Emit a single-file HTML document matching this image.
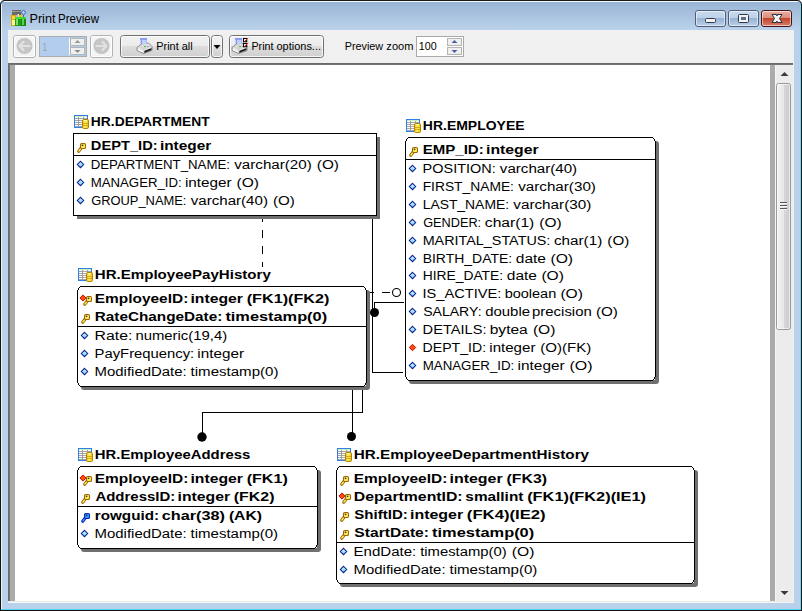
<!DOCTYPE html><html><head><meta charset="utf-8"><style>html,body{margin:0;padding:0;width:802px;height:611px;overflow:hidden;background:#fff}svg{display:block}text{font-family:"Liberation Sans",sans-serif}</style></head><body><svg width="802" height="611" viewBox="0 0 802 611" shape-rendering="auto"><defs>
<linearGradient id="gTitle" x1="0" y1="0" x2="0" y2="1"><stop offset="0" stop-color="#97b2d2"/><stop offset="1" stop-color="#bad2eb"/></linearGradient>
<linearGradient id="gBtn" x1="0" y1="0" x2="0" y2="1"><stop offset="0" stop-color="#f2f2f2"/><stop offset="0.48" stop-color="#ebebeb"/><stop offset="0.5" stop-color="#dddddd"/><stop offset="1" stop-color="#cfcfcf"/></linearGradient>
<linearGradient id="gCap" x1="0" y1="0" x2="0" y2="1"><stop offset="0" stop-color="#cbdbee"/><stop offset="0.47" stop-color="#bcd0e8"/><stop offset="0.5" stop-color="#98b3d3"/><stop offset="1" stop-color="#bcd1ea"/></linearGradient>
<linearGradient id="gClose" x1="0" y1="0" x2="0" y2="1"><stop offset="0" stop-color="#eab0a2"/><stop offset="0.47" stop-color="#dc8e7c"/><stop offset="0.5" stop-color="#c3442a"/><stop offset="1" stop-color="#d98270"/></linearGradient>
<linearGradient id="gThumb" x1="0" y1="0" x2="1" y2="0"><stop offset="0" stop-color="#f3f3f3"/><stop offset="0.5" stop-color="#e8e8e8"/><stop offset="0.5" stop-color="#d9d9dc"/><stop offset="1" stop-color="#c9c9ce"/></linearGradient>
<linearGradient id="gDia" x1="0" y1="0" x2="0" y2="1"><stop offset="0" stop-color="#e0faff"/><stop offset="1" stop-color="#62cdf8"/></linearGradient>
<linearGradient id="gCyl" x1="0" y1="0" x2="1" y2="0"><stop offset="0" stop-color="#f0c020"/><stop offset="0.45" stop-color="#fff460"/><stop offset="1" stop-color="#e8b818"/></linearGradient>
<linearGradient id="gPr" x1="0" y1="0" x2="0" y2="1"><stop offset="0" stop-color="#e6e6e6"/><stop offset="0.6" stop-color="#cfcfcf"/><stop offset="1" stop-color="#9a9a9a"/></linearGradient>
</defs>
<rect x="0" y="0" width="802" height="611" fill="#b9d1ea" />
<rect x="0" y="0" width="802" height="30" fill="url(#gTitle)" />
<rect x="4" y="0" width="794" height="1" fill="#1a1a1a" />
<rect x="0" y="4" width="1" height="607" fill="#111" />
<rect x="801" y="4" width="1" height="607" fill="#111" />
<rect x="0" y="610" width="802" height="1" fill="#111" />
<rect x="4" y="1" width="794" height="1" fill="#f4f8fc" />
<rect x="1" y="4" width="1" height="606" fill="#eef3f9" />
<rect x="800" y="4" width="1" height="606" fill="#72d8f4" />
<rect x="1" y="609" width="800" height="1" fill="#50d4f6" />
<path d="M0 5 Q0 0 5 0 L0 0Z" fill="#ffffff"/>
<path d="M802 5 Q802 0 797 0 L802 0Z" fill="#ffffff"/>
<path d="M0.5 5 Q0.5 0.5 5 0.5" stroke="#1a1a1a" fill="none"/>
<path d="M801.5 5 Q801.5 0.5 797 0.5" stroke="#1a1a1a" fill="none"/>
<g>
<rect x="11" y="15" width="5" height="11" fill="#d8a800" />
<rect x="12" y="16" width="3" height="3" fill="#ffd030" />
<rect x="12" y="20" width="3" height="5" fill="#fff0a0" />
<rect x="12" y="19" width="3" height="1" fill="#e0b000" />
<rect x="19" y="15" width="3" height="3" fill="#f0c000" />
<rect x="12" y="10" width="4" height="5" fill="#6c6c6c" />
<rect x="16" y="10" width="5" height="5" fill="#666666" />
<rect x="12" y="11" width="9" height="1" fill="#9c9c9c" />
<rect x="17" y="14" width="2" height="4" fill="#e0e0e0" />
<rect x="17" y="14" width="1" height="4" fill="#b0b0b0" />
<rect x="15" y="17" width="6" height="9" fill="#1c9c1c" />
<rect x="15" y="17" width="6" height="2" fill="#3ee03e" />
<rect x="16" y="19" width="2" height="6" fill="#78e068" />
<rect x="21" y="17" width="5" height="9" fill="#168a16" />
<rect x="21" y="17" width="5" height="2" fill="#36d836" />
<rect x="22" y="19" width="2" height="6" fill="#62d052" />
<ellipse cx="23.5" cy="12.5" rx="1.8" ry="2.1" fill="#b8d4f4" stroke="#3a6ab8" stroke-width="1"/>
<rect x="23" y="15" width="1" height="2" fill="#3a6ab8" />
</g>
<text x="29.46" y="23" font-size="12.5" fill="#000" textLength="26.03" lengthAdjust="spacingAndGlyphs" >Print</text>
<text x="58.06" y="23" font-size="12.5" fill="#000" textLength="40.92" lengthAdjust="spacingAndGlyphs" >Preview</text>
<rect x="695.5" y="10.5" width="30" height="16" rx="2.5" fill="url(#gCap)" stroke="#4c5e78"/>
<rect x="696.5" y="11.5" width="28" height="14" rx="1.5" fill="none" stroke="#ffffff" stroke-opacity="0.55"/>
<rect x="728.5" y="10.5" width="30" height="16" rx="2.5" fill="url(#gCap)" stroke="#4c5e78"/>
<rect x="729.5" y="11.5" width="28" height="14" rx="1.5" fill="none" stroke="#ffffff" stroke-opacity="0.55"/>
<rect x="761.5" y="10.5" width="30" height="16" rx="2.5" fill="url(#gClose)" stroke="#4a1218"/>
<rect x="762.5" y="11.5" width="28" height="14" rx="1.5" fill="none" stroke="#ffffff" stroke-opacity="0.55"/>
<rect x="705.5" y="18.5" width="10" height="4" rx="1" fill="#f2f2f2" stroke="#303a4a"/>
<rect x="738.5" y="14.5" width="10" height="8" rx="1" fill="#f2f2f2" stroke="#303a4a"/>
<rect x="741" y="17" width="5" height="3" fill="#5a6f8c"/>
<path d="M772 14.5 L776.5 14.5 L777 16 L777.5 14.5 L782 14.5 L779.5 18.5 L782 22.5 L777.5 22.5 L777 21 L776.5 22.5 L772 22.5 L774.5 18.5 Z" fill="#f4f4f4" stroke="#2a3040" stroke-width="1" stroke-linejoin="round"/>
<rect x="8" y="30" width="786" height="33" fill="#f0f0f0" />
<rect x="13.5" y="35.5" width="22" height="22" rx="2.5" fill="#f4f4f4" stroke="#acb3b9"/>
<rect x="14.5" y="36.5" width="20" height="20" rx="1.5" fill="none" stroke="#ffffff"/>
<circle cx="24.5" cy="46" r="8" fill="#c2c2c2"/>
<circle cx="24.5" cy="46" r="7" fill="#c6c6c6"/>
<path d="M19.5 46 L23.5 42 M19.5 46 L23.5 50 M19.5 46 L29.5 46" stroke="#e2e2e2" stroke-width="2.2" fill="none" stroke-linecap="round"/>
<rect x="90.5" y="35.5" width="22" height="22" rx="2.5" fill="#f4f4f4" stroke="#acb3b9"/>
<rect x="91.5" y="36.5" width="20" height="20" rx="1.5" fill="none" stroke="#ffffff"/>
<circle cx="101.5" cy="46" r="8" fill="#c2c2c2"/>
<circle cx="101.5" cy="46" r="7" fill="#c6c6c6"/>
<path d="M106.5 46 L102.5 42 M106.5 46 L102.5 50 M106.5 46 L96.5 46" stroke="#e2e2e2" stroke-width="2.2" fill="none" stroke-linecap="round"/>
<rect x="39" y="36" width="48" height="21" fill="#a8acb0" />
<rect x="40" y="37" width="46" height="19" fill="#b2cdee" />
<rect x="69" y="38" width="1" height="17" fill="#ffffff" />
<rect x="70.5" y="38.5" width="14" height="7" fill="#f0f0f0" stroke="#b4b4b4"/>
<rect x="70.5" y="47.5" width="14" height="7" fill="#f0f0f0" stroke="#b4b4b4"/>
<path d="M74.5 43 L77.5 40 L80.5 43 Z" fill="#9a9a9a"/>
<path d="M74.5 50 L77.5 53 L80.5 50 Z" fill="#8a8a8a"/>
<text x="42.3" y="50.5" font-size="11" fill="#a0a4aa" textLength="5" lengthAdjust="spacingAndGlyphs" >1</text>
<rect x="120.5" y="35.5" width="89" height="22" rx="3" fill="url(#gBtn)" stroke="#707070"/>
<rect x="121.5" y="36.5" width="87" height="20" rx="2" fill="none" stroke="#ffffff" stroke-opacity="0.8"/>
<rect x="211.5" y="35.5" width="11" height="22" rx="3" fill="url(#gBtn)" stroke="#707070"/>
<rect x="212.5" y="36.5" width="9" height="20" rx="2" fill="none" stroke="#ffffff" stroke-opacity="0.8"/>
<path d="M213.5 45 L220.5 45 L217 49 Z" fill="#000"/>
<rect x="229.5" y="35.5" width="94" height="22" rx="3" fill="url(#gBtn)" stroke="#707070"/>
<rect x="230.5" y="36.5" width="92" height="20" rx="2" fill="none" stroke="#ffffff" stroke-opacity="0.8"/>
<g transform="translate(135,36)">
<path d="M2 11.5 L6.5 8 L13.5 7 L17 10.5 L17 14.5 L8.5 17.5 L2 14.5 Z" fill="url(#gPr)" stroke="#808080" stroke-width="0.9" stroke-linejoin="round"/>
<path d="M2.8 12.6 L8.6 15.2 L8.6 17 L2.8 14.3 Z" fill="#ffffff"/>
<path d="M9.4 14.8 L16.4 12 L16.4 13.9 L9.4 16.8 Z" fill="#1c1c1c"/>
<path d="M3 11.6 L8.8 14.4 L16.2 11.4" stroke="#f4f4f4" stroke-width="0.8" fill="none"/>
<rect x="5" y="2" width="7" height="6" fill="#c2d0ff"/>
<rect x="5" y="2" width="7" height="2" fill="#8e9cf0"/>
<rect x="6" y="4" width="1" height="4" fill="#8a98e6"/>
<rect x="11" y="4" width="1" height="4" fill="#a8b8f8"/>
<rect x="9" y="10" width="2" height="1" fill="#3cbc3c"/>
<rect x="12" y="10" width="2" height="1" fill="#9aa8e8"/>
</g>
<text x="156.31" y="50" font-size="11.5" fill="#000" textLength="22.37" lengthAdjust="spacingAndGlyphs" >Print</text>
<text x="181.73" y="50" font-size="11.5" fill="#000" textLength="11.0" lengthAdjust="spacingAndGlyphs" >all</text>
<g transform="translate(230,36)">
<path d="M2 11.5 L6.5 8 L13.5 7 L17 10.5 L17 14.5 L8.5 17.5 L2 14.5 Z" fill="url(#gPr)" stroke="#808080" stroke-width="0.9" stroke-linejoin="round"/>
<path d="M2.8 12.6 L8.6 15.2 L8.6 17 L2.8 14.3 Z" fill="#ffffff"/>
<path d="M9.4 14.8 L16.4 12 L16.4 13.9 L9.4 16.8 Z" fill="#1c1c1c"/>
<path d="M3 11.6 L8.8 14.4 L16.2 11.4" stroke="#f4f4f4" stroke-width="0.8" fill="none"/>
<rect x="5" y="2" width="7" height="6" fill="#c2d0ff"/>
<rect x="5" y="2" width="7" height="2" fill="#8e9cf0"/>
<rect x="6" y="4" width="1" height="4" fill="#8a98e6"/>
<rect x="11" y="4" width="1" height="4" fill="#a8b8f8"/>
<rect x="9" y="10" width="2" height="1" fill="#3cbc3c"/>
<rect x="12" y="10" width="2" height="1" fill="#9aa8e8"/>
<rect x="13.5" y="2.5" width="3.2" height="3.2" fill="#fff" stroke="#000" stroke-width="1.1"/>
<rect x="13.5" y="7.5" width="3.2" height="3.2" fill="#fff" stroke="#000" stroke-width="1.1"/>
<path d="M14.5 5.5 L18.2 1.8 M14.5 10.5 L18.2 6.8" stroke="#ff1a1a" stroke-width="1"/>
</g>
<text x="251.42" y="50" font-size="11.5" fill="#000" textLength="22.06" lengthAdjust="spacingAndGlyphs" >Print</text>
<text x="276.54" y="50" font-size="11.5" fill="#000" textLength="44.46" lengthAdjust="spacingAndGlyphs" >options...</text>
<text x="344.71" y="50" font-size="11.5" fill="#000" textLength="38.46" lengthAdjust="spacingAndGlyphs" >Preview</text>
<text x="386.35" y="50" font-size="11.5" fill="#000" textLength="27.08" lengthAdjust="spacingAndGlyphs" >zoom</text>
<rect x="416" y="36" width="48" height="21" fill="#a9a9a9" />
<rect x="417" y="37" width="46" height="19" fill="#ffffff" />
<rect x="447.5" y="38.5" width="14" height="7" fill="#f0f0f0" stroke="#b4b4b4"/>
<rect x="447.5" y="47.5" width="14" height="7" fill="#f0f0f0" stroke="#b4b4b4"/>
<path d="M451.5 43 L454.5 40 L457.5 43 Z" fill="#4a60a0"/>
<path d="M451.5 50 L454.5 53 L457.5 50 Z" fill="#4a60a0"/>
<text x="418.79" y="50" font-size="11.5" fill="#000" textLength="17.83" lengthAdjust="spacingAndGlyphs" >100</text>
<rect x="8" y="63" width="786" height="539" fill="#ababab" />
<rect x="8" y="63" width="786" height="1" fill="#6a6a6a" />
<rect x="8" y="63" width="1" height="538" fill="#6a6a6a" />
<rect x="9" y="64" width="785" height="1" fill="#747474" />
<rect x="9" y="64" width="1" height="537" fill="#747474" />
<rect x="15" y="65" width="755" height="536" fill="#ffffff" />
<rect x="8" y="601" width="786" height="1" fill="#e9e9e9" />
<rect x="8" y="602" width="786" height="1" fill="#f5f5f5" />
<rect x="793" y="63" width="1" height="540" fill="#f0f0f0" />
<rect x="775" y="65" width="18" height="536" fill="#ececec" />
<rect x="775" y="65" width="1" height="536" fill="#f6f6f6" />
<path d="M780.5 76 L784.5 72 L788.5 76 Z" fill="#3a3a3a"/>
<path d="M780.5 591 L784.5 595 L788.5 591 Z" fill="#3a3a3a"/>
<rect x="776.5" y="83.5" width="14" height="246" rx="2" fill="url(#gThumb)" stroke="#9a9a9a"/>
<rect x="777.5" y="84.5" width="12" height="244" rx="1" fill="none" stroke="#ffffff" stroke-opacity="0.6"/>
<rect x="780" y="202" width="7" height="1" fill="#555" />
<rect x="780" y="203" width="7" height="1" fill="#f8f8f8" />
<rect x="780" y="205" width="7" height="1" fill="#555" />
<rect x="780" y="206" width="7" height="1" fill="#f8f8f8" />
<rect x="780" y="208" width="7" height="1" fill="#555" />
<rect x="780" y="209" width="7" height="1" fill="#f8f8f8" />
<rect x="262" y="219" width="1" height="3" fill="#000" />
<rect x="262" y="230" width="1" height="8" fill="#000" />
<rect x="262" y="246" width="1" height="8" fill="#000" />
<rect x="262" y="262" width="1" height="5" fill="#000" />
<rect x="372" y="219" width="1" height="154" fill="#000" />
<rect x="372" y="372" width="31" height="1" fill="#000" />
<rect x="369" y="292" width="5" height="1" fill="#000" />
<rect x="382" y="292" width="8" height="1" fill="#000" />
<circle cx="396.5" cy="292.5" r="4" fill="none" stroke="#000" stroke-width="1.1"/>
<rect x="374" y="302" width="30" height="1" fill="#000" />
<rect x="374" y="302" width="1" height="8" fill="#000" />
<circle cx="374.5" cy="312.5" r="4.5" fill="#000"/>
<rect x="352" y="390" width="1" height="44" fill="#000" />
<circle cx="351.5" cy="436.5" r="4.5" fill="#000"/>
<rect x="362" y="390" width="1" height="23" fill="#000" />
<rect x="202" y="412" width="161" height="1" fill="#000" />
<rect x="202" y="412" width="1" height="22" fill="#000" />
<circle cx="202" cy="437" r="4.7" fill="#000"/>
<rect x="77" y="137" width="303" height="82" fill="#707070" />
<rect x="73" y="133" width="304" height="83" fill="#000" />
<rect x="74" y="134" width="302" height="81" fill="#ffffff" />
<rect x="74" y="115" width="14" height="13" fill="#2f7fe6" />
<rect x="75" y="116" width="12" height="11" fill="#ffffff" />
<rect x="75" y="116" width="12" height="1" fill="#c8f0b8" />
<rect x="75" y="118" width="12" height="1" fill="#a6a6a6" />
<rect x="75" y="120" width="12" height="1" fill="#a6a6a6" />
<rect x="75" y="122" width="12" height="1" fill="#a6a6a6" />
<rect x="75" y="124" width="12" height="1" fill="#a6a6a6" />
<rect x="75" y="126" width="12" height="1" fill="#a6a6a6" />
<rect x="78" y="117" width="1" height="10" fill="#9c9c9c" />
<rect x="83" y="117" width="1" height="10" fill="#9c9c9c" />
<rect x="82.5" y="119.5" width="6" height="9" rx="1.2" fill="url(#gCyl)" stroke="#b08400" stroke-width="1"/>
<rect x="83" y="123" width="5" height="1" fill="#d8a810" />
<rect x="83" y="125" width="5" height="1" fill="#d8a810" />
<rect x="84" y="120" width="3" height="1" fill="#fff8b0" />
<text x="90.88" y="126" font-size="12.5" font-weight="bold" fill="#000" textLength="118.76" lengthAdjust="spacingAndGlyphs" >HR.DEPARTMENT</text>
<path d="M81.4 147.8 L78.7 151.3" stroke="#9c6400" stroke-width="3.1" stroke-linecap="round"/>
<path d="M81.4 147.8 L78.9 151.0" stroke="#fff05a" stroke-width="1.3" stroke-linecap="round"/>
<rect x="80.5" y="143.5" width="5" height="5" rx="1.3" fill="#fff05a" stroke="#9c6400" stroke-width="1.1"/>
<rect x="81.8" y="144.6" width="1.5" height="1.5" fill="#303030"/>
<text x="90.82" y="150" font-size="12.5" font-weight="bold" fill="#000" textLength="66.79" lengthAdjust="spacingAndGlyphs" >DEPT_ID:</text>
<text x="159.93" y="150" font-size="12.5" font-weight="bold" fill="#000" textLength="51.31" lengthAdjust="spacingAndGlyphs" >integer</text>
<rect x="74" y="155" width="302" height="1" fill="#000" />
<path d="M80.5 161.3 L83.7 164.5 L80.5 167.7 L77.3 164.5 Z" fill="url(#gDia)" stroke="#0c1c90" stroke-width="1.05"/>
<text x="90.72" y="169" font-size="12.5" fill="#000" textLength="139.27" lengthAdjust="spacingAndGlyphs" >DEPARTMENT_NAME:</text>
<text x="234.25" y="169" font-size="12.5" fill="#000" textLength="77.49" lengthAdjust="spacingAndGlyphs" >varchar(20)</text>
<text x="316.85" y="169" font-size="12.5" fill="#000" textLength="22.1" lengthAdjust="spacingAndGlyphs" >(O)</text>
<path d="M80.5 179.3 L83.7 182.5 L80.5 185.7 L77.3 182.5 Z" fill="url(#gDia)" stroke="#0c1c90" stroke-width="1.05"/>
<text x="90.72" y="187" font-size="12.5" fill="#000" textLength="90.99" lengthAdjust="spacingAndGlyphs" >MANAGER_ID:</text>
<text x="184.98" y="187" font-size="12.5" fill="#000" textLength="46.67" lengthAdjust="spacingAndGlyphs" >integer</text>
<text x="236.54" y="187" font-size="12.5" fill="#000" textLength="22.43" lengthAdjust="spacingAndGlyphs" >(O)</text>
<path d="M80.5 197.3 L83.7 200.5 L80.5 203.7 L77.3 200.5 Z" fill="url(#gDia)" stroke="#0c1c90" stroke-width="1.05"/>
<text x="91.15" y="205" font-size="12.5" fill="#000" textLength="95.33" lengthAdjust="spacingAndGlyphs" >GROUP_NAME:</text>
<text x="190.75" y="205" font-size="12.5" fill="#000" textLength="77.19" lengthAdjust="spacingAndGlyphs" >varchar(40)</text>
<text x="273.06" y="205" font-size="12.5" fill="#000" textLength="21.88" lengthAdjust="spacingAndGlyphs" >(O)</text>
<rect x="409" y="141" width="250" height="243" rx="3" fill="#707070"/>
<rect x="406" y="138" width="249" height="242" fill="#ffffff" />
<rect x="408" y="137" width="245" height="1" fill="#000" />
<rect x="408" y="380" width="245" height="1" fill="#000" />
<rect x="405" y="141" width="1" height="236" fill="#000" />
<rect x="655" y="141" width="1" height="236" fill="#000" />
<rect x="407" y="138" width="1" height="1" fill="#000" />
<rect x="406" y="139" width="1" height="1" fill="#000" />
<rect x="406" y="140" width="1" height="1" fill="#000" />
<rect x="653" y="138" width="1" height="1" fill="#000" />
<rect x="654" y="139" width="1" height="1" fill="#000" />
<rect x="654" y="140" width="1" height="1" fill="#000" />
<rect x="407" y="379" width="1" height="1" fill="#000" />
<rect x="406" y="378" width="1" height="1" fill="#000" />
<rect x="406" y="377" width="1" height="1" fill="#000" />
<rect x="653" y="379" width="1" height="1" fill="#000" />
<rect x="654" y="378" width="1" height="1" fill="#000" />
<rect x="654" y="377" width="1" height="1" fill="#000" />
<rect x="407" y="139" width="247" height="240" fill="#ffffff" />
<rect x="408" y="138" width="245" height="242" fill="#ffffff" />
<rect x="406" y="141" width="249" height="236" fill="#ffffff" />
<rect x="406" y="119" width="14" height="13" fill="#2f7fe6" />
<rect x="407" y="120" width="12" height="11" fill="#ffffff" />
<rect x="407" y="120" width="12" height="1" fill="#c8f0b8" />
<rect x="407" y="122" width="12" height="1" fill="#a6a6a6" />
<rect x="407" y="124" width="12" height="1" fill="#a6a6a6" />
<rect x="407" y="126" width="12" height="1" fill="#a6a6a6" />
<rect x="407" y="128" width="12" height="1" fill="#a6a6a6" />
<rect x="407" y="130" width="12" height="1" fill="#a6a6a6" />
<rect x="410" y="121" width="1" height="10" fill="#9c9c9c" />
<rect x="415" y="121" width="1" height="10" fill="#9c9c9c" />
<rect x="414.5" y="123.5" width="6" height="9" rx="1.2" fill="url(#gCyl)" stroke="#b08400" stroke-width="1"/>
<rect x="415" y="127" width="5" height="1" fill="#d8a810" />
<rect x="415" y="129" width="5" height="1" fill="#d8a810" />
<rect x="416" y="124" width="3" height="1" fill="#fff8b0" />
<text x="422.87" y="130" font-size="12.5" font-weight="bold" fill="#000" textLength="101.68" lengthAdjust="spacingAndGlyphs" >HR.EMPLOYEE</text>
<path d="M413.4 151.8 L410.7 155.3" stroke="#9c6400" stroke-width="3.1" stroke-linecap="round"/>
<path d="M413.4 151.8 L410.9 155.0" stroke="#fff05a" stroke-width="1.3" stroke-linecap="round"/>
<rect x="412.5" y="147.5" width="5" height="5" rx="1.3" fill="#fff05a" stroke="#9c6400" stroke-width="1.1"/>
<rect x="413.8" y="148.6" width="1.5" height="1.5" fill="#303030"/>
<text x="422.79" y="154" font-size="12.5" font-weight="bold" fill="#000" textLength="60.95" lengthAdjust="spacingAndGlyphs" >EMP_ID:</text>
<text x="486.0" y="154" font-size="12.5" font-weight="bold" fill="#000" textLength="52.64" lengthAdjust="spacingAndGlyphs" >integer</text>
<rect x="406" y="159" width="249" height="1" fill="#000" />
<path d="M412.5 165.3 L415.7 168.5 L412.5 171.7 L409.3 168.5 Z" fill="url(#gDia)" stroke="#0c1c90" stroke-width="1.05"/>
<text x="422.61" y="173" font-size="12.5" fill="#000" textLength="73.11" lengthAdjust="spacingAndGlyphs" >POSITION:</text>
<text x="499.85" y="173" font-size="12.5" fill="#000" textLength="77.29" lengthAdjust="spacingAndGlyphs" >varchar(40)</text>
<path d="M412.5 183.3 L415.7 186.5 L412.5 189.7 L409.3 186.5 Z" fill="url(#gDia)" stroke="#0c1c90" stroke-width="1.05"/>
<text x="422.67" y="191" font-size="12.5" fill="#000" textLength="91.29" lengthAdjust="spacingAndGlyphs" >FIRST_NAME:</text>
<text x="518.15" y="191" font-size="12.5" fill="#000" textLength="77.8" lengthAdjust="spacingAndGlyphs" >varchar(30)</text>
<path d="M412.5 201.3 L415.7 204.5 L412.5 207.7 L409.3 204.5 Z" fill="url(#gDia)" stroke="#0c1c90" stroke-width="1.05"/>
<text x="422.66" y="209" font-size="12.5" fill="#000" textLength="86.41" lengthAdjust="spacingAndGlyphs" >LAST_NAME:</text>
<text x="513.25" y="209" font-size="12.5" fill="#000" textLength="78.1" lengthAdjust="spacingAndGlyphs" >varchar(30)</text>
<path d="M412.5 219.3 L415.7 222.5 L412.5 225.7 L409.3 222.5 Z" fill="url(#gDia)" stroke="#0c1c90" stroke-width="1.05"/>
<text x="423.16" y="227" font-size="12.5" fill="#000" textLength="58.0" lengthAdjust="spacingAndGlyphs" >GENDER:</text>
<text x="484.84" y="227" font-size="12.5" fill="#000" textLength="49.43" lengthAdjust="spacingAndGlyphs" >char(1)</text>
<text x="539.34" y="227" font-size="12.5" fill="#000" textLength="22.32" lengthAdjust="spacingAndGlyphs" >(O)</text>
<path d="M412.5 237.3 L415.7 240.5 L412.5 243.7 L409.3 240.5 Z" fill="url(#gDia)" stroke="#0c1c90" stroke-width="1.05"/>
<text x="422.65" y="245" font-size="12.5" fill="#000" textLength="127.73" lengthAdjust="spacingAndGlyphs" >MARITAL_STATUS:</text>
<text x="553.95" y="245" font-size="12.5" fill="#000" textLength="48.29" lengthAdjust="spacingAndGlyphs" >char(1)</text>
<text x="607.36" y="245" font-size="12.5" fill="#000" textLength="21.88" lengthAdjust="spacingAndGlyphs" >(O)</text>
<path d="M412.5 255.3 L415.7 258.5 L412.5 261.7 L409.3 258.5 Z" fill="url(#gDia)" stroke="#0c1c90" stroke-width="1.05"/>
<text x="422.67" y="263" font-size="12.5" fill="#000" textLength="89.49" lengthAdjust="spacingAndGlyphs" >BIRTH_DATE:</text>
<text x="515.75" y="263" font-size="12.5" fill="#000" textLength="30.24" lengthAdjust="spacingAndGlyphs" >date</text>
<text x="550.43" y="263" font-size="12.5" fill="#000" textLength="22.65" lengthAdjust="spacingAndGlyphs" >(O)</text>
<path d="M412.5 272.3 L415.7 275.5 L412.5 278.7 L409.3 275.5 Z" fill="url(#gDia)" stroke="#0c1c90" stroke-width="1.05"/>
<text x="422.68" y="280" font-size="12.5" fill="#000" textLength="80.47" lengthAdjust="spacingAndGlyphs" >HIRE_DATE:</text>
<text x="506.75" y="280" font-size="12.5" fill="#000" textLength="30.24" lengthAdjust="spacingAndGlyphs" >date</text>
<text x="541.43" y="280" font-size="12.5" fill="#000" textLength="22.54" lengthAdjust="spacingAndGlyphs" >(O)</text>
<path d="M412.5 290.3 L415.7 293.5 L412.5 296.7 L409.3 293.5 Z" fill="url(#gDia)" stroke="#0c1c90" stroke-width="1.05"/>
<text x="422.45" y="298" font-size="12.5" fill="#000" textLength="78.99" lengthAdjust="spacingAndGlyphs" >IS_ACTIVE:</text>
<text x="504.67" y="298" font-size="12.5" fill="#000" textLength="51.58" lengthAdjust="spacingAndGlyphs" >boolean</text>
<text x="560.43" y="298" font-size="12.5" fill="#000" textLength="22.54" lengthAdjust="spacingAndGlyphs" >(O)</text>
<path d="M412.5 308.3 L415.7 311.5 L412.5 314.7 L409.3 311.5 Z" fill="url(#gDia)" stroke="#0c1c90" stroke-width="1.05"/>
<text x="423.17" y="316" font-size="12.5" fill="#000" textLength="58.39" lengthAdjust="spacingAndGlyphs" >SALARY:</text>
<text x="485.17" y="316" font-size="12.5" fill="#000" textLength="44.89" lengthAdjust="spacingAndGlyphs" >double</text>
<text x="532.04" y="316" font-size="12.5" fill="#000" textLength="59.73" lengthAdjust="spacingAndGlyphs" >precision</text>
<text x="595.96" y="316" font-size="12.5" fill="#000" textLength="21.99" lengthAdjust="spacingAndGlyphs" >(O)</text>
<path d="M412.5 326.3 L415.7 329.5 L412.5 332.7 L409.3 329.5 Z" fill="url(#gDia)" stroke="#0c1c90" stroke-width="1.05"/>
<text x="422.62" y="334" font-size="12.5" fill="#000" textLength="63.89" lengthAdjust="spacingAndGlyphs" >DETAILS:</text>
<text x="489.7" y="334" font-size="12.5" fill="#000" textLength="38.1" lengthAdjust="spacingAndGlyphs" >bytea</text>
<text x="532.93" y="334" font-size="12.5" fill="#000" textLength="22.54" lengthAdjust="spacingAndGlyphs" >(O)</text>
<path d="M412.5 344.3 L415.7 347.5 L412.5 350.7 L409.3 347.5 Z" fill="#ff4a10" stroke="#c01000" stroke-width="1"/>
<text x="422.64" y="352" font-size="12.5" fill="#000" textLength="63.44" lengthAdjust="spacingAndGlyphs" >DEPT_ID:</text>
<text x="489.29" y="352" font-size="12.5" fill="#000" textLength="46.16" lengthAdjust="spacingAndGlyphs" >integer</text>
<text x="540.37" y="352" font-size="12.5" fill="#000" textLength="50.97" lengthAdjust="spacingAndGlyphs" >(O)(FK)</text>
<path d="M412.5 362.3 L415.7 365.5 L412.5 368.7 L409.3 365.5 Z" fill="url(#gDia)" stroke="#0c1c90" stroke-width="1.05"/>
<text x="422.71" y="370" font-size="12.5" fill="#000" textLength="91.6" lengthAdjust="spacingAndGlyphs" >MANAGER_ID:</text>
<text x="517.57" y="370" font-size="12.5" fill="#000" textLength="47.09" lengthAdjust="spacingAndGlyphs" >integer</text>
<text x="569.51" y="370" font-size="12.5" fill="#000" textLength="23.08" lengthAdjust="spacingAndGlyphs" >(O)</text>
<rect x="81" y="290" width="289" height="100" rx="3" fill="#707070"/>
<rect x="78" y="287" width="288" height="99" fill="#ffffff" />
<rect x="80" y="286" width="284" height="1" fill="#000" />
<rect x="80" y="386" width="284" height="1" fill="#000" />
<rect x="77" y="290" width="1" height="93" fill="#000" />
<rect x="366" y="290" width="1" height="93" fill="#000" />
<rect x="79" y="287" width="1" height="1" fill="#000" />
<rect x="78" y="288" width="1" height="1" fill="#000" />
<rect x="78" y="289" width="1" height="1" fill="#000" />
<rect x="364" y="287" width="1" height="1" fill="#000" />
<rect x="365" y="288" width="1" height="1" fill="#000" />
<rect x="365" y="289" width="1" height="1" fill="#000" />
<rect x="79" y="385" width="1" height="1" fill="#000" />
<rect x="78" y="384" width="1" height="1" fill="#000" />
<rect x="78" y="383" width="1" height="1" fill="#000" />
<rect x="364" y="385" width="1" height="1" fill="#000" />
<rect x="365" y="384" width="1" height="1" fill="#000" />
<rect x="365" y="383" width="1" height="1" fill="#000" />
<rect x="79" y="288" width="286" height="97" fill="#ffffff" />
<rect x="80" y="287" width="284" height="99" fill="#ffffff" />
<rect x="78" y="290" width="288" height="93" fill="#ffffff" />
<rect x="78" y="268" width="14" height="13" fill="#2f7fe6" />
<rect x="79" y="269" width="12" height="11" fill="#ffffff" />
<rect x="79" y="269" width="12" height="1" fill="#c8f0b8" />
<rect x="79" y="271" width="12" height="1" fill="#a6a6a6" />
<rect x="79" y="273" width="12" height="1" fill="#a6a6a6" />
<rect x="79" y="275" width="12" height="1" fill="#a6a6a6" />
<rect x="79" y="277" width="12" height="1" fill="#a6a6a6" />
<rect x="79" y="279" width="12" height="1" fill="#a6a6a6" />
<rect x="82" y="270" width="1" height="10" fill="#9c9c9c" />
<rect x="87" y="270" width="1" height="10" fill="#9c9c9c" />
<rect x="86.5" y="272.5" width="6" height="9" rx="1.2" fill="url(#gCyl)" stroke="#b08400" stroke-width="1"/>
<rect x="87" y="276" width="5" height="1" fill="#d8a810" />
<rect x="87" y="278" width="5" height="1" fill="#d8a810" />
<rect x="88" y="273" width="3" height="1" fill="#fff8b0" />
<text x="94.79" y="279" font-size="12.5" font-weight="bold" fill="#000" textLength="175.99" lengthAdjust="spacingAndGlyphs" >HR.EmployeePayHistory</text>
<path d="M83 294.9 L86.1 298 L83 301.1 L79.9 298 Z" fill="#ff4a10" stroke="#c01000" stroke-width="1"/>
<path d="M87.4 300.8 L84.7 304.3" stroke="#9c6400" stroke-width="3.1" stroke-linecap="round"/>
<path d="M87.4 300.8 L84.9 304.0" stroke="#fff05a" stroke-width="1.3" stroke-linecap="round"/>
<rect x="86.5" y="296.5" width="5" height="5" rx="1.3" fill="#fff05a" stroke="#9c6400" stroke-width="1.1"/>
<rect x="87.8" y="297.6" width="1.5" height="1.5" fill="#303030"/>
<text x="94.77" y="303" font-size="12.5" font-weight="bold" fill="#000" textLength="93.52" lengthAdjust="spacingAndGlyphs" >EmployeeID:</text>
<text x="190.5" y="303" font-size="12.5" font-weight="bold" fill="#000" textLength="52.44" lengthAdjust="spacingAndGlyphs" >integer</text>
<text x="246.69" y="303" font-size="12.5" font-weight="bold" fill="#000" textLength="82.71" lengthAdjust="spacingAndGlyphs" >(FK1)(FK2)</text>
<path d="M85.4 318.8 L82.7 322.3" stroke="#9c6400" stroke-width="3.1" stroke-linecap="round"/>
<path d="M85.4 318.8 L82.9 322.0" stroke="#fff05a" stroke-width="1.3" stroke-linecap="round"/>
<rect x="84.5" y="314.5" width="5" height="5" rx="1.3" fill="#fff05a" stroke="#9c6400" stroke-width="1.1"/>
<rect x="85.8" y="315.6" width="1.5" height="1.5" fill="#303030"/>
<text x="94.78" y="321" font-size="12.5" font-weight="bold" fill="#000" textLength="127.49" lengthAdjust="spacingAndGlyphs" >RateChangeDate:</text>
<text x="225.4" y="321" font-size="12.5" font-weight="bold" fill="#000" textLength="101.71" lengthAdjust="spacingAndGlyphs" >timestamp(0)</text>
<rect x="78" y="326" width="288" height="1" fill="#000" />
<path d="M84.5 332.3 L87.7 335.5 L84.5 338.7 L81.3 335.5 Z" fill="url(#gDia)" stroke="#0c1c90" stroke-width="1.05"/>
<text x="94.5" y="340" font-size="12.5" fill="#000" textLength="37.84" lengthAdjust="spacingAndGlyphs" >Rate:</text>
<text x="135.41" y="340" font-size="12.5" fill="#000" textLength="91.71" lengthAdjust="spacingAndGlyphs" >numeric(19,4)</text>
<path d="M84.5 350.3 L87.7 353.5 L84.5 356.7 L81.3 353.5 Z" fill="url(#gDia)" stroke="#0c1c90" stroke-width="1.05"/>
<text x="94.58" y="358" font-size="12.5" fill="#000" textLength="99.67" lengthAdjust="spacingAndGlyphs" >PayFrequency:</text>
<text x="197.38" y="358" font-size="12.5" fill="#000" textLength="46.67" lengthAdjust="spacingAndGlyphs" >integer</text>
<path d="M84.5 368.3 L87.7 371.5 L84.5 374.7 L81.3 371.5 Z" fill="url(#gDia)" stroke="#0c1c90" stroke-width="1.05"/>
<text x="94.58" y="376" font-size="12.5" fill="#000" textLength="92.09" lengthAdjust="spacingAndGlyphs" >ModifiedDate:</text>
<text x="190.57" y="376" font-size="12.5" fill="#000" textLength="87.86" lengthAdjust="spacingAndGlyphs" >timestamp(0)</text>
<rect x="81" y="470" width="240" height="82" rx="3" fill="#707070"/>
<rect x="78" y="467" width="239" height="81" fill="#ffffff" />
<rect x="80" y="466" width="235" height="1" fill="#000" />
<rect x="80" y="548" width="235" height="1" fill="#000" />
<rect x="77" y="470" width="1" height="75" fill="#000" />
<rect x="317" y="470" width="1" height="75" fill="#000" />
<rect x="79" y="467" width="1" height="1" fill="#000" />
<rect x="78" y="468" width="1" height="1" fill="#000" />
<rect x="78" y="469" width="1" height="1" fill="#000" />
<rect x="315" y="467" width="1" height="1" fill="#000" />
<rect x="316" y="468" width="1" height="1" fill="#000" />
<rect x="316" y="469" width="1" height="1" fill="#000" />
<rect x="79" y="547" width="1" height="1" fill="#000" />
<rect x="78" y="546" width="1" height="1" fill="#000" />
<rect x="78" y="545" width="1" height="1" fill="#000" />
<rect x="315" y="547" width="1" height="1" fill="#000" />
<rect x="316" y="546" width="1" height="1" fill="#000" />
<rect x="316" y="545" width="1" height="1" fill="#000" />
<rect x="79" y="468" width="237" height="79" fill="#ffffff" />
<rect x="80" y="467" width="235" height="81" fill="#ffffff" />
<rect x="78" y="470" width="239" height="75" fill="#ffffff" />
<rect x="78" y="448" width="14" height="13" fill="#2f7fe6" />
<rect x="79" y="449" width="12" height="11" fill="#ffffff" />
<rect x="79" y="449" width="12" height="1" fill="#c8f0b8" />
<rect x="79" y="451" width="12" height="1" fill="#a6a6a6" />
<rect x="79" y="453" width="12" height="1" fill="#a6a6a6" />
<rect x="79" y="455" width="12" height="1" fill="#a6a6a6" />
<rect x="79" y="457" width="12" height="1" fill="#a6a6a6" />
<rect x="79" y="459" width="12" height="1" fill="#a6a6a6" />
<rect x="82" y="450" width="1" height="10" fill="#9c9c9c" />
<rect x="87" y="450" width="1" height="10" fill="#9c9c9c" />
<rect x="86.5" y="452.5" width="6" height="9" rx="1.2" fill="url(#gCyl)" stroke="#b08400" stroke-width="1"/>
<rect x="87" y="456" width="5" height="1" fill="#d8a810" />
<rect x="87" y="458" width="5" height="1" fill="#d8a810" />
<rect x="88" y="453" width="3" height="1" fill="#fff8b0" />
<text x="94.8" y="459" font-size="12.5" font-weight="bold" fill="#000" textLength="155.51" lengthAdjust="spacingAndGlyphs" >HR.EmployeeAddress</text>
<path d="M83 474.9 L86.1 478 L83 481.1 L79.9 478 Z" fill="#ff4a10" stroke="#c01000" stroke-width="1"/>
<path d="M87.4 480.8 L84.7 484.3" stroke="#9c6400" stroke-width="3.1" stroke-linecap="round"/>
<path d="M87.4 480.8 L84.9 484.0" stroke="#fff05a" stroke-width="1.3" stroke-linecap="round"/>
<rect x="86.5" y="476.5" width="5" height="5" rx="1.3" fill="#fff05a" stroke="#9c6400" stroke-width="1.1"/>
<rect x="87.8" y="477.6" width="1.5" height="1.5" fill="#303030"/>
<text x="94.77" y="483" font-size="12.5" font-weight="bold" fill="#000" textLength="93.52" lengthAdjust="spacingAndGlyphs" >EmployeeID:</text>
<text x="190.5" y="483" font-size="12.5" font-weight="bold" fill="#000" textLength="52.44" lengthAdjust="spacingAndGlyphs" >integer</text>
<text x="246.7" y="483" font-size="12.5" font-weight="bold" fill="#000" textLength="41.1" lengthAdjust="spacingAndGlyphs" >(FK1)</text>
<path d="M85.4 498.8 L82.7 502.3" stroke="#9c6400" stroke-width="3.1" stroke-linecap="round"/>
<path d="M85.4 498.8 L82.9 502.0" stroke="#fff05a" stroke-width="1.3" stroke-linecap="round"/>
<rect x="84.5" y="494.5" width="5" height="5" rx="1.3" fill="#fff05a" stroke="#9c6400" stroke-width="1.1"/>
<rect x="85.8" y="495.6" width="1.5" height="1.5" fill="#303030"/>
<text x="95.43" y="501" font-size="12.5" font-weight="bold" fill="#000" textLength="79.81" lengthAdjust="spacingAndGlyphs" >AddressID:</text>
<text x="177.5" y="501" font-size="12.5" font-weight="bold" fill="#000" textLength="52.54" lengthAdjust="spacingAndGlyphs" >integer</text>
<text x="233.81" y="501" font-size="12.5" font-weight="bold" fill="#000" textLength="40.69" lengthAdjust="spacingAndGlyphs" >(FK2)</text>
<rect x="78" y="506" width="239" height="1" fill="#000" />
<path d="M85.4 517.8 L82.7 521.3" stroke="#0a24b4" stroke-width="3.1" stroke-linecap="round"/>
<path d="M85.4 517.8 L82.9 521.0" stroke="#2a9cff" stroke-width="1.3" stroke-linecap="round"/>
<rect x="84.5" y="513.5" width="5" height="5" rx="1.3" fill="#2a9cff" stroke="#0a24b4" stroke-width="1.1"/>
<rect x="85.8" y="514.6" width="1.5" height="1.5" fill="#202a50"/>
<text x="94.8" y="520" font-size="12.5" font-weight="bold" fill="#000" textLength="64.27" lengthAdjust="spacingAndGlyphs" >rowguid:</text>
<text x="161.77" y="520" font-size="12.5" font-weight="bold" fill="#000" textLength="63.24" lengthAdjust="spacingAndGlyphs" >char(38)</text>
<text x="228.92" y="520" font-size="12.5" font-weight="bold" fill="#000" textLength="32.96" lengthAdjust="spacingAndGlyphs" >(AK)</text>
<path d="M84.5 530.3 L87.7 533.5 L84.5 536.7 L81.3 533.5 Z" fill="url(#gDia)" stroke="#0c1c90" stroke-width="1.05"/>
<text x="94.58" y="538" font-size="12.5" fill="#000" textLength="92.09" lengthAdjust="spacingAndGlyphs" >ModifiedDate:</text>
<text x="190.57" y="538" font-size="12.5" fill="#000" textLength="87.56" lengthAdjust="spacingAndGlyphs" >timestamp(0)</text>
<rect x="340" y="470" width="358" height="117" rx="3" fill="#707070"/>
<rect x="337" y="467" width="357" height="116" fill="#ffffff" />
<rect x="339" y="466" width="353" height="1" fill="#000" />
<rect x="339" y="583" width="353" height="1" fill="#000" />
<rect x="336" y="470" width="1" height="110" fill="#000" />
<rect x="694" y="470" width="1" height="110" fill="#000" />
<rect x="338" y="467" width="1" height="1" fill="#000" />
<rect x="337" y="468" width="1" height="1" fill="#000" />
<rect x="337" y="469" width="1" height="1" fill="#000" />
<rect x="692" y="467" width="1" height="1" fill="#000" />
<rect x="693" y="468" width="1" height="1" fill="#000" />
<rect x="693" y="469" width="1" height="1" fill="#000" />
<rect x="338" y="582" width="1" height="1" fill="#000" />
<rect x="337" y="581" width="1" height="1" fill="#000" />
<rect x="337" y="580" width="1" height="1" fill="#000" />
<rect x="692" y="582" width="1" height="1" fill="#000" />
<rect x="693" y="581" width="1" height="1" fill="#000" />
<rect x="693" y="580" width="1" height="1" fill="#000" />
<rect x="338" y="468" width="355" height="114" fill="#ffffff" />
<rect x="339" y="467" width="353" height="116" fill="#ffffff" />
<rect x="337" y="470" width="357" height="110" fill="#ffffff" />
<rect x="337" y="448" width="14" height="13" fill="#2f7fe6" />
<rect x="338" y="449" width="12" height="11" fill="#ffffff" />
<rect x="338" y="449" width="12" height="1" fill="#c8f0b8" />
<rect x="338" y="451" width="12" height="1" fill="#a6a6a6" />
<rect x="338" y="453" width="12" height="1" fill="#a6a6a6" />
<rect x="338" y="455" width="12" height="1" fill="#a6a6a6" />
<rect x="338" y="457" width="12" height="1" fill="#a6a6a6" />
<rect x="338" y="459" width="12" height="1" fill="#a6a6a6" />
<rect x="341" y="450" width="1" height="10" fill="#9c9c9c" />
<rect x="346" y="450" width="1" height="10" fill="#9c9c9c" />
<rect x="345.5" y="452.5" width="6" height="9" rx="1.2" fill="url(#gCyl)" stroke="#b08400" stroke-width="1"/>
<rect x="346" y="456" width="5" height="1" fill="#d8a810" />
<rect x="346" y="458" width="5" height="1" fill="#d8a810" />
<rect x="347" y="453" width="3" height="1" fill="#fff8b0" />
<text x="353.78" y="459" font-size="12.5" font-weight="bold" fill="#000" textLength="235.3" lengthAdjust="spacingAndGlyphs" >HR.EmployeeDepartmentHistory</text>
<path d="M344.4 480.8 L341.7 484.3" stroke="#9c6400" stroke-width="3.1" stroke-linecap="round"/>
<path d="M344.4 480.8 L341.9 484.0" stroke="#fff05a" stroke-width="1.3" stroke-linecap="round"/>
<rect x="343.5" y="476.5" width="5" height="5" rx="1.3" fill="#fff05a" stroke="#9c6400" stroke-width="1.1"/>
<rect x="344.8" y="477.6" width="1.5" height="1.5" fill="#303030"/>
<text x="353.77" y="483" font-size="12.5" font-weight="bold" fill="#000" textLength="93.52" lengthAdjust="spacingAndGlyphs" >EmployeeID:</text>
<text x="449.48" y="483" font-size="12.5" font-weight="bold" fill="#000" textLength="53.26" lengthAdjust="spacingAndGlyphs" >integer</text>
<text x="506.51" y="483" font-size="12.5" font-weight="bold" fill="#000" textLength="40.48" lengthAdjust="spacingAndGlyphs" >(FK3)</text>
<path d="M342 492.9 L345.1 496 L342 499.1 L338.9 496 Z" fill="#ff4a10" stroke="#c01000" stroke-width="1"/>
<path d="M346.4 498.8 L343.7 502.3" stroke="#9c6400" stroke-width="3.1" stroke-linecap="round"/>
<path d="M346.4 498.8 L343.9 502.0" stroke="#fff05a" stroke-width="1.3" stroke-linecap="round"/>
<rect x="345.5" y="494.5" width="5" height="5" rx="1.3" fill="#fff05a" stroke="#9c6400" stroke-width="1.1"/>
<rect x="346.8" y="495.6" width="1.5" height="1.5" fill="#303030"/>
<text x="353.74" y="501" font-size="12.5" font-weight="bold" fill="#000" textLength="108.88" lengthAdjust="spacingAndGlyphs" >DepartmentID:</text>
<text x="465.36" y="501" font-size="12.5" font-weight="bold" fill="#000" textLength="58.03" lengthAdjust="spacingAndGlyphs" >smallint</text>
<text x="527.19" y="501" font-size="12.5" font-weight="bold" fill="#000" textLength="118.83" lengthAdjust="spacingAndGlyphs" >(FK1)(FK2)(IE1)</text>
<path d="M344.4 516.8 L341.7 520.3" stroke="#9c6400" stroke-width="3.1" stroke-linecap="round"/>
<path d="M344.4 516.8 L341.9 520.0" stroke="#fff05a" stroke-width="1.3" stroke-linecap="round"/>
<rect x="343.5" y="512.5" width="5" height="5" rx="1.3" fill="#fff05a" stroke="#9c6400" stroke-width="1.1"/>
<rect x="344.8" y="513.6" width="1.5" height="1.5" fill="#303030"/>
<text x="354.37" y="519" font-size="12.5" font-weight="bold" fill="#000" textLength="53.38" lengthAdjust="spacingAndGlyphs" >ShiftID:</text>
<text x="409.99" y="519" font-size="12.5" font-weight="bold" fill="#000" textLength="53.15" lengthAdjust="spacingAndGlyphs" >integer</text>
<text x="466.87" y="519" font-size="12.5" font-weight="bold" fill="#000" textLength="78.76" lengthAdjust="spacingAndGlyphs" >(FK4)(IE2)</text>
<path d="M344.4 534.8 L341.7 538.3" stroke="#9c6400" stroke-width="3.1" stroke-linecap="round"/>
<path d="M344.4 534.8 L341.9 538.0" stroke="#fff05a" stroke-width="1.3" stroke-linecap="round"/>
<rect x="343.5" y="530.5" width="5" height="5" rx="1.3" fill="#fff05a" stroke="#9c6400" stroke-width="1.1"/>
<rect x="344.8" y="531.6" width="1.5" height="1.5" fill="#303030"/>
<text x="354.35" y="537" font-size="12.5" font-weight="bold" fill="#000" textLength="74.65" lengthAdjust="spacingAndGlyphs" >StartDate:</text>
<text x="432.1" y="537" font-size="12.5" font-weight="bold" fill="#000" textLength="102.12" lengthAdjust="spacingAndGlyphs" >timestamp(0)</text>
<rect x="337" y="542" width="357" height="1" fill="#000" />
<path d="M343.5 548.3 L346.7 551.5 L343.5 554.7 L340.3 551.5 Z" fill="url(#gDia)" stroke="#0c1c90" stroke-width="1.05"/>
<text x="353.57" y="556" font-size="12.5" fill="#000" textLength="62.71" lengthAdjust="spacingAndGlyphs" >EndDate:</text>
<text x="420.18" y="556" font-size="12.5" fill="#000" textLength="86.44" lengthAdjust="spacingAndGlyphs" >timestamp(0)</text>
<text x="511.73" y="556" font-size="12.5" fill="#000" textLength="22.65" lengthAdjust="spacingAndGlyphs" >(O)</text>
<path d="M343.5 566.3 L346.7 569.5 L343.5 572.7 L340.3 569.5 Z" fill="url(#gDia)" stroke="#0c1c90" stroke-width="1.05"/>
<text x="353.58" y="574" font-size="12.5" fill="#000" textLength="91.98" lengthAdjust="spacingAndGlyphs" >ModifiedDate:</text>
<text x="449.47" y="574" font-size="12.5" fill="#000" textLength="87.86" lengthAdjust="spacingAndGlyphs" >timestamp(0)</text></svg></body></html>
